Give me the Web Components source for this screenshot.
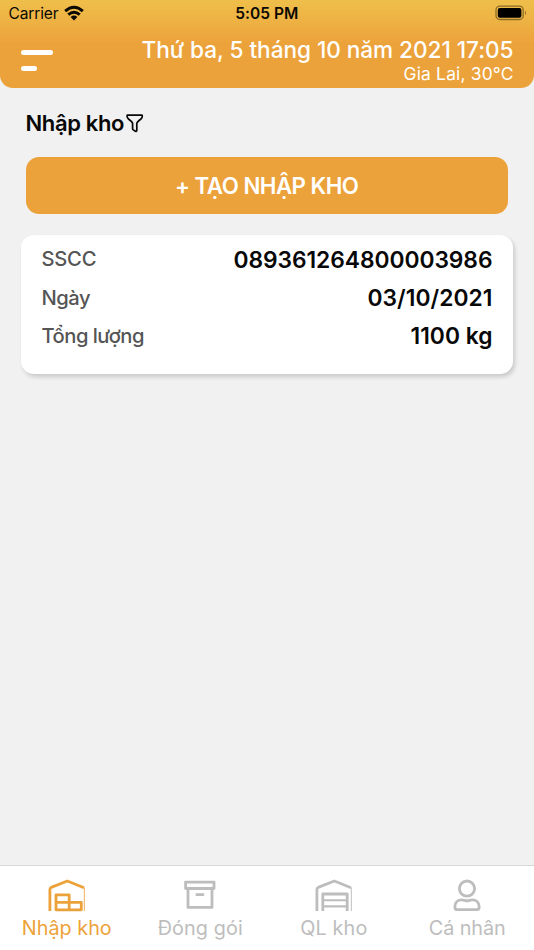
<!DOCTYPE html>
<html lang="vi">
<head>
<meta charset="utf-8">
<title>Nhập kho</title>
<style>
html,body{margin:0;height:100%}
body{font-family:Inter,"Liberation Sans",sans-serif;background:#f1f1f1;overflow:hidden}
</style>
</head>
<body>
<warehouse-app></warehouse-app>
<script>
const define = (name, html, setup) => {
  const t = document.createElement('template');
  t.innerHTML = html;
  customElements.define(name, class extends HTMLElement {
    connectedCallback() {
      if (this.shadowRoot) return;
      this.attachShadow({mode: 'open'}).append(t.content.cloneNode(true));
      if (setup) setup(this, this.shadowRoot);
    }
  });
};

/* One line of text tracked to a given advance width */
define('tracked-text', `
<style>
:host{display:block;flex:none;white-space:nowrap}
span{display:inline-block}
</style><span></span>`, (host, root) => {
  const span = root.querySelector('span');
  const text = host.getAttribute('text');
  span.textContent = text;
  const w = +host.getAttribute('w');
  const gap = (w - span.getBoundingClientRect().width) / (text.length - 1);
  span.style.letterSpacing = gap + 'px';
  span.style.marginRight = -gap + 'px';
});

define('status-bar', `
<style>
:host{display:grid;grid-template-columns:1fr auto 1fr;align-items:center;height:28px;padding:0 7px 0 8.5px;color:#0b0903;font-size:15.5px;line-height:28px}
.left{display:flex;align-items:center;gap:6px}
.time{font-weight:600;margin-left:-2px}
.right{display:flex;justify-content:flex-end}
svg{display:block}
</style>
<div class="left"><tracked-text text="Carrier" w="50"></tracked-text>
<svg width="20" height="16" viewBox="0 0 20 16" style="margin-top:-2px"><g fill="none" stroke="#0b0903" stroke-width="3"><path d="M1.2 6.2Q10 -1.6 18.8 6.2"/><path d="M4.3 9.7Q10 4.8 15.7 9.7"/></g><path d="M6.6 12Q10 9.1 13.4 12L10 15.4Z" fill="#0b0903"/></svg></div>
<tracked-text class="time" text="5:05 PM" w="63"></tracked-text>
<div class="right"><svg width="32" height="16" viewBox="0 0 32 16" style="margin-top:-2px"><rect x="1" y="1.2" width="27.2" height="13.3" rx="3.8" fill="none" stroke="#8b6c25" stroke-width="1.3"/><rect x="2.8" y="3" width="23.6" height="9.7" rx="2" fill="#000"/><path d="M30 5.4Q32 7.8 30 10.2Z" fill="#8b6c25"/></svg></div>`);

define('app-header', `
<style>
:host{display:block;flex:none;height:88px;box-sizing:border-box;border-radius:0 0 13px 13px;color:#fff;background:linear-gradient(#efbf4a 0,#eeb545 16px,#eca23a 44px,#eca23a)}
.row{display:flex;justify-content:space-between;padding:0 20.5px 0 21px}
.menu{display:flex;flex-direction:column;gap:10.5px;padding-top:22px}
i{display:block;height:5.3px;border-radius:3px;background:#fff;width:32px}
i+i{width:15.5px}
.info{display:flex;flex-direction:column;align-items:flex-end;padding-top:8px}
.date{font-size:22.6px;line-height:27px;font-weight:500}
.place{font-size:17.4px;line-height:22px}
</style>
<status-bar></status-bar>
<div class="row"><div class="menu"><i></i><i></i></div>
<div class="info"><tracked-text class="date" text="Thứ ba, 5 tháng 10 năm 2021 17:05" w="372"></tracked-text>
<tracked-text class="place" text="Gia Lai, 30°C" w="110"></tracked-text></div></div>`);

define('page-title', `
<style>
:host{display:flex;align-items:center;gap:1.5px;height:30px;padding-left:25px;color:#080808;font-size:22px;line-height:30px;font-weight:600}
svg{display:block}
</style>
<tracked-text text="Nhập kho" w="99"></tracked-text>
<svg width="18" height="19" viewBox="0 0 18 19"><path d="M1.2 1.2H16.1Q16.8 3.2 15 5Q10.8 8.2 10.8 9.4V16.5Q10.5 17.8 9.4 17.3L7 15.6Q6.6 15.3 6.6 14.7V9.4Q6.4 8 2.4 5Q.7 3.2 1.2 1.2Z" fill="none" stroke="#080808" stroke-width="1.7" stroke-linejoin="round"/></svg>`);

define('primary-button', `
<style>
:host{display:block}
button{display:flex;align-items:center;justify-content:center;width:100%;height:57px;border:0;padding:0;border-radius:13px;background:#eca23a;color:#fff;font:600 22.3px/28px Inter,sans-serif}
</style>
<button><tracked-text text="+ TẠO NHẬP KHO" w="184"></tracked-text></button>`);

define('info-row', `
<style>
:host{display:flex;justify-content:space-between;align-items:center;height:38.4px}
.k{color:#555;font-size:20.2px;font-weight:500}
.v{color:#080808;font-size:22.8px;font-weight:600;margin-top:1px}
</style>`, (host, root) => {
  for (const c of ['k', 'v']) {
    const el = document.createElement('tracked-text');
    el.className = c;
    el.setAttribute('text', host.getAttribute(c));
    el.setAttribute('w', host.getAttribute(c + 'w'));
    root.append(el);
  }
});

define('info-card', `
<style>
:host{display:block;box-sizing:border-box;height:139px;padding:4.5px 20.5px 0;border-radius:13px;background:#fff;box-shadow:2px 3px 4px rgba(0,0,0,.16)}
</style><slot></slot>`);

define('tab-item', `
<style>
:host{display:flex;flex-direction:column;align-items:center;color:#bdbdbd;font-size:19.8px;line-height:26px}
:host([active]){color:#eca23a}
div{height:36px;margin-top:13px;display:flex}
</style><div><slot></slot></div><section></section>`, (host, root) => {
  const el = document.createElement('tracked-text');
  el.setAttribute('text', host.getAttribute('label'));
  el.setAttribute('w', host.getAttribute('w'));
  root.querySelector('section').append(el);
});

define('tab-bar', `
<style>
:host{display:grid;grid-template-columns:repeat(4,1fr);flex:none;height:85px;box-sizing:border-box;border-top:1.5px solid #d8d8d8;background:#fff}
svg{display:block;fill:none;stroke:currentColor}
</style>
<tab-item active label="Nhập kho" w="90"><svg width="38" height="34" viewBox="0 0 38 34"><g stroke-width="2.8" stroke-linejoin="round"><path d="M1.9 32V10.5Q1.9 9 3.2 8.4L19.4 2L36 8.8"/><path d="M8 15.8H21.2V23.3H33.3V30.8H8ZM8 23.3H21.2V30.8"/></g><path d="M36.4 8.5V32" stroke-width="1.2" opacity=".7"/></svg></tab-item>
<tab-item label="Đóng gói" w="85"><svg width="32" height="34" viewBox="0 0 32 34"><g stroke-width="2.8" stroke-linejoin="round"><rect x="1.6" y="3.1" width="28.4" height="6.4"/><path d="M4 9.5V28.4H28V9.5M12.8 15.7H19" stroke-linecap="round"/></g></svg></tab-item>
<tab-item label="QL kho" w="67"><svg width="38" height="34" viewBox="0 0 38 34"><g stroke-width="2.8" stroke-linejoin="round"><path d="M1.9 32V10.5Q1.9 9 3.2 8.4L19.4 2L36 8.8"/><path d="M7.8 32V15H32.2V32"/></g><path d="M8 21.3H32M8 27.4H32" stroke-width="2.1"/><path d="M36.4 8.5V32" stroke-width="1.2" opacity=".8"/></svg></tab-item>
<tab-item label="Cá nhân" w="77"><svg width="28" height="34" viewBox="0 0 28 34"><g stroke-width="2.8" stroke-linejoin="round"><circle cx="14" cy="9.6" r="7.6"/><path d="M8.8 20.8C11.5 20.8 11.7 21.8 14 21.8S16.5 20.8 19.2 20.8C23.5 20.8 26.1 23.6 26.1 27.5V28.5Q26.1 30.7 23.9 30.7H4.1Q1.9 30.7 1.9 28.5V27.5C1.9 23.6 4.5 20.8 8.8 20.8Z"/></g></svg></tab-item>`);

define('warehouse-app', `
<style>
:host{display:flex;flex-direction:column;width:534px;height:950px;background:#f1f1f1}
main{flex:1;padding:20px 21px 0}
page-title{margin-left:-20.5px}
primary-button{margin:19px 5px 21px}
</style>
<app-header></app-header>
<main>
<page-title></page-title>
<primary-button></primary-button>
<info-card>
<info-row k="SSCC" kw="55" v="089361264800003986" vw="259"></info-row>
<info-row k="Ngày" kw="49" v="03/10/2021" vw="125"></info-row>
<info-row k="Tổng lượng" kw="103" v="1100 kg" vw="82"></info-row>
</info-card>
</main>
<tab-bar></tab-bar>`);
</script>
</body>
</html>
